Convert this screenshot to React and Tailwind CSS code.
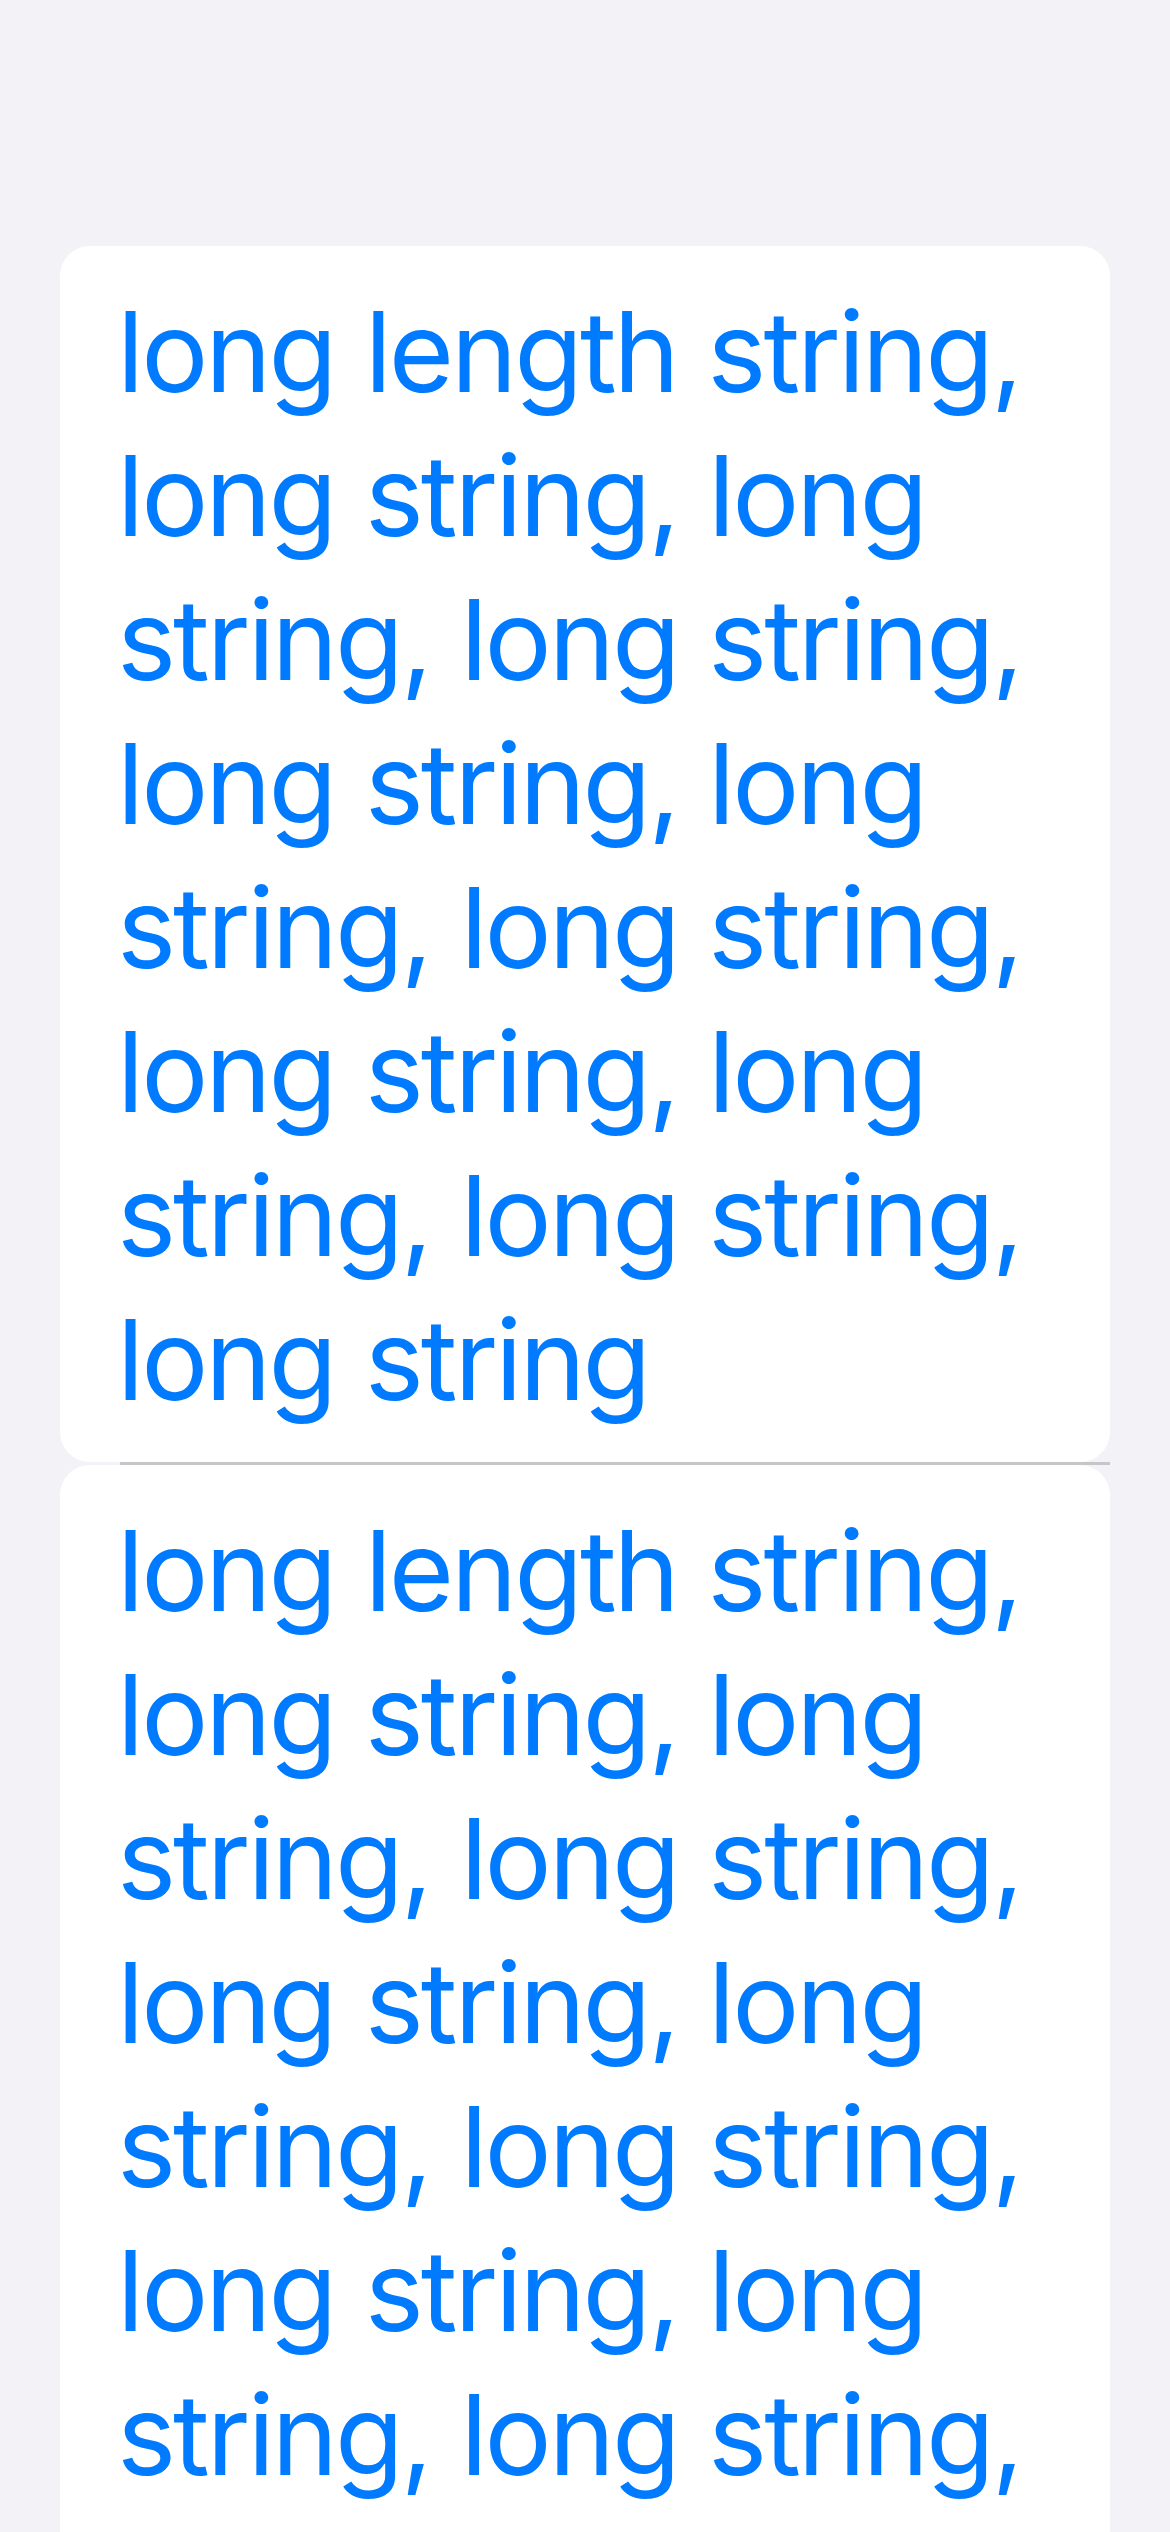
import React from 'react';

const TEXT =
    'long length string, long string, long string, long string, long string, long string, long string, long string, long string, long string, long string';

const Cell = ({ children }) => (
    <div className="bg-white rounded-[30px] pl-[57px] pr-[40px] pt-[33px] pb-[31px]">
        <p className="text-[112px] leading-[144px] text-[#007aff] tracking-[-3px] [word-spacing:2px]">{children}</p>
    </div>
);

const App = () => {
    return (
        <div
            className="h-[2532px] overflow-hidden bg-[#f2f2f7] pt-[246px] px-[60px]"
            style={{ fontFamily: 'Inter, "Noto Sans", sans-serif' }}
        >
            <div className="flex flex-col">
                <Cell>{TEXT}</Cell>
                <div className="ml-[60px] h-[3px] bg-[#c6c6c8]" />
                <Cell>{TEXT}</Cell>
            </div>
        </div>
    );
};

export default App;
